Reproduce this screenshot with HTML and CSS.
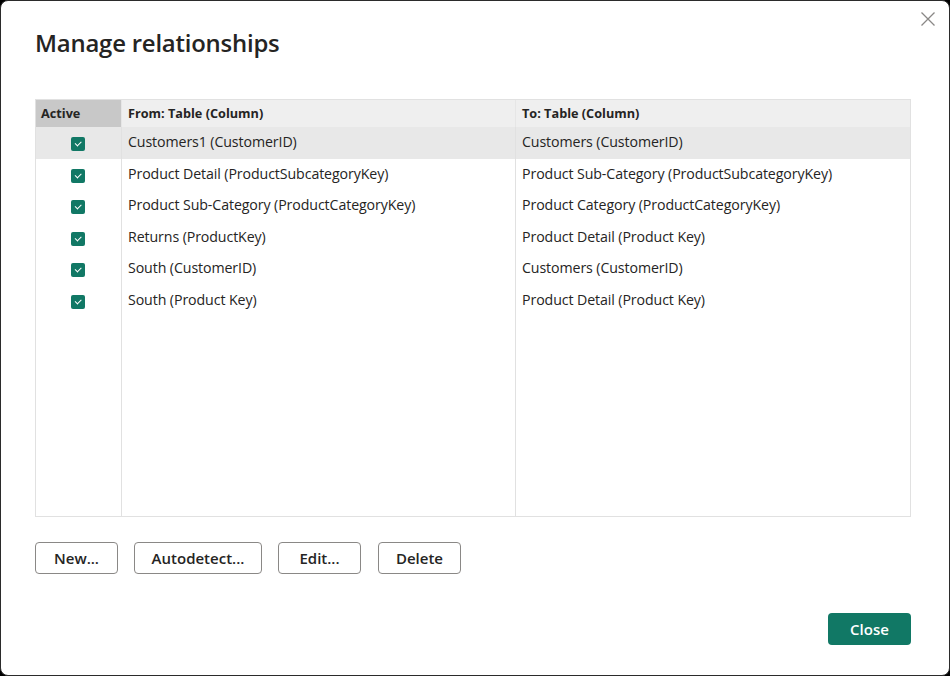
FILE: index.html
```html
<!DOCTYPE html>
<html lang="en">
<head>
<meta charset="utf-8">
<title>Manage relationships</title>
<link rel="stylesheet" href="styles.css">
</head>
<body>
<div class="dialog">
  <button class="dismiss" aria-label="Close">
    <svg width="16" height="16" viewBox="0 0 16 16"><path d="M1.5 1.5 L14.5 14.5 M14.5 1.5 L1.5 14.5" stroke="#8a8886" stroke-width="1.3" fill="none"/></svg>
  </button>
  <h1 class="title">Manage relationships</h1>
  <div class="table">
    <div class="th th-active">Active</div>
    <div class="th">From: Table (Column)</div>
    <div class="th th-last">To: Table (Column)</div>

    <div class="td td-check sel"><span class="cb"></span></div>
    <div class="td sel">Customers1 (CustomerID)</div>
    <div class="td td-last sel">Customers (CustomerID)</div>

    <div class="td td-check"><span class="cb"></span></div>
    <div class="td">Product Detail (ProductSubcategoryKey)</div>
    <div class="td td-last">Product Sub-Category (ProductSubcategoryKey)</div>

    <div class="td td-check"><span class="cb"></span></div>
    <div class="td">Product Sub-Category (ProductCategoryKey)</div>
    <div class="td td-last">Product Category (ProductCategoryKey)</div>

    <div class="td td-check"><span class="cb"></span></div>
    <div class="td">Returns (ProductKey)</div>
    <div class="td td-last">Product Detail (Product Key)</div>

    <div class="td td-check"><span class="cb"></span></div>
    <div class="td">South (CustomerID)</div>
    <div class="td td-last">Customers (CustomerID)</div>

    <div class="td td-check"><span class="cb"></span></div>
    <div class="td">South (Product Key)</div>
    <div class="td td-last">Product Detail (Product Key)</div>

    <div class="fill"></div>
    <div class="fill"></div>
    <div class="fill td-last"></div>
  </div>
  <div class="actions">
    <button class="btn">New...</button>
    <button class="btn btn-wide">Autodetect...</button>
    <button class="btn">Edit...</button>
    <button class="btn btn-delete">Delete</button>
  </div>
  <div class="footer">
    <button class="btn-primary">Close</button>
  </div>
</div>
</body>
</html>
```
FILE: styles.css
```css
html, body {
  margin: 0;
  padding: 0;
  background: #000;
}
body {
  width: 950px;
  height: 676px;
  font-family: "Open Sans", "Noto Sans", sans-serif;
  color: #252423;
}
.dialog {
  position: relative;
  box-sizing: border-box;
  width: 950px;
  height: 676px;
  background: #fff;
  border: 1px solid #2b2b2b;
  border-radius: 8px;
  padding: 0 38px 0 34px;
  display: flex;
  flex-direction: column;
}
.dismiss {
  position: absolute;
  top: 9px;
  right: 12px;
  width: 18px;
  height: 18px;
  padding: 0;
  border: 0;
  background: transparent;
  display: flex;
  align-items: center;
  justify-content: center;
}
.title {
  margin: 26px 0 0 0;
  font-size: 23.9px;
  font-weight: 600;
  line-height: 32px;
  letter-spacing: -0.2px;
}
.table {
  margin-top: 40px;
  height: 418px;
  box-sizing: border-box;
  border: 1px solid #e1e1e1;
  display: grid;
  grid-template-columns: 86px 394px 1fr;
  grid-template-rows: 27px repeat(6, 31.5px) 1fr;
  font-size: 14.2px;
}
.th {
  background: #efefef;
  font-weight: 700;
  font-size: 12.7px;
  display: flex;
  align-items: center;
  padding-left: 6px;
  padding-bottom: 2px;
  border-right: 1px solid #e6e6e6;
}
.th-active {
  background: #c8c8c8;
  padding-left: 5px;
}
.td {
  display: flex;
  align-items: center;
  padding-left: 6px;
  padding-bottom: 2px;
  border-right: 1px solid #e1e1e1;
  white-space: nowrap;
  letter-spacing: -0.1px;
}
.td.sel { background: #e8e8e8; }
.td-check {
  justify-content: center;
  padding-left: 0;
}
.fill {
  border-right: 1px solid #e1e1e1;
}
.th.th-last, .td.td-last, .fill.td-last { border-right: 0; }
.cb {
  position: relative;
  width: 14px;
  height: 14px;
  background: #117865;
  border-radius: 2px;
  margin-top: 5px;
  margin-left: -2px;
}
.cb::after {
  content: "";
  position: absolute;
  left: 4px;
  top: 4px;
  width: 5px;
  height: 2.5px;
  border-left: 1.5px solid #fff;
  border-bottom: 1.5px solid #fff;
  transform: rotate(-45deg);
}
.actions {
  margin-top: 25px;
  display: flex;
  gap: 16px;
}
.btn, .btn-primary {
  font-family: "Open Sans", "Noto Sans", sans-serif;
  font-weight: 600;
  font-size: 15px;
  height: 32px;
  min-width: 83px;
  border-radius: 4px;
  padding: 0 12px;
  cursor: pointer;
}
.btn {
  background: #fff;
  color: #252423;
  border: 1px solid #8a8886;
}
.btn-wide { min-width: 128px; }
.btn-delete { margin-left: 1px; }
.footer {
  margin-top: 39px;
  display: flex;
  justify-content: flex-end;
}
.btn-primary {
  background: #117865;
  color: #fff;
  border: 0;
}
```
